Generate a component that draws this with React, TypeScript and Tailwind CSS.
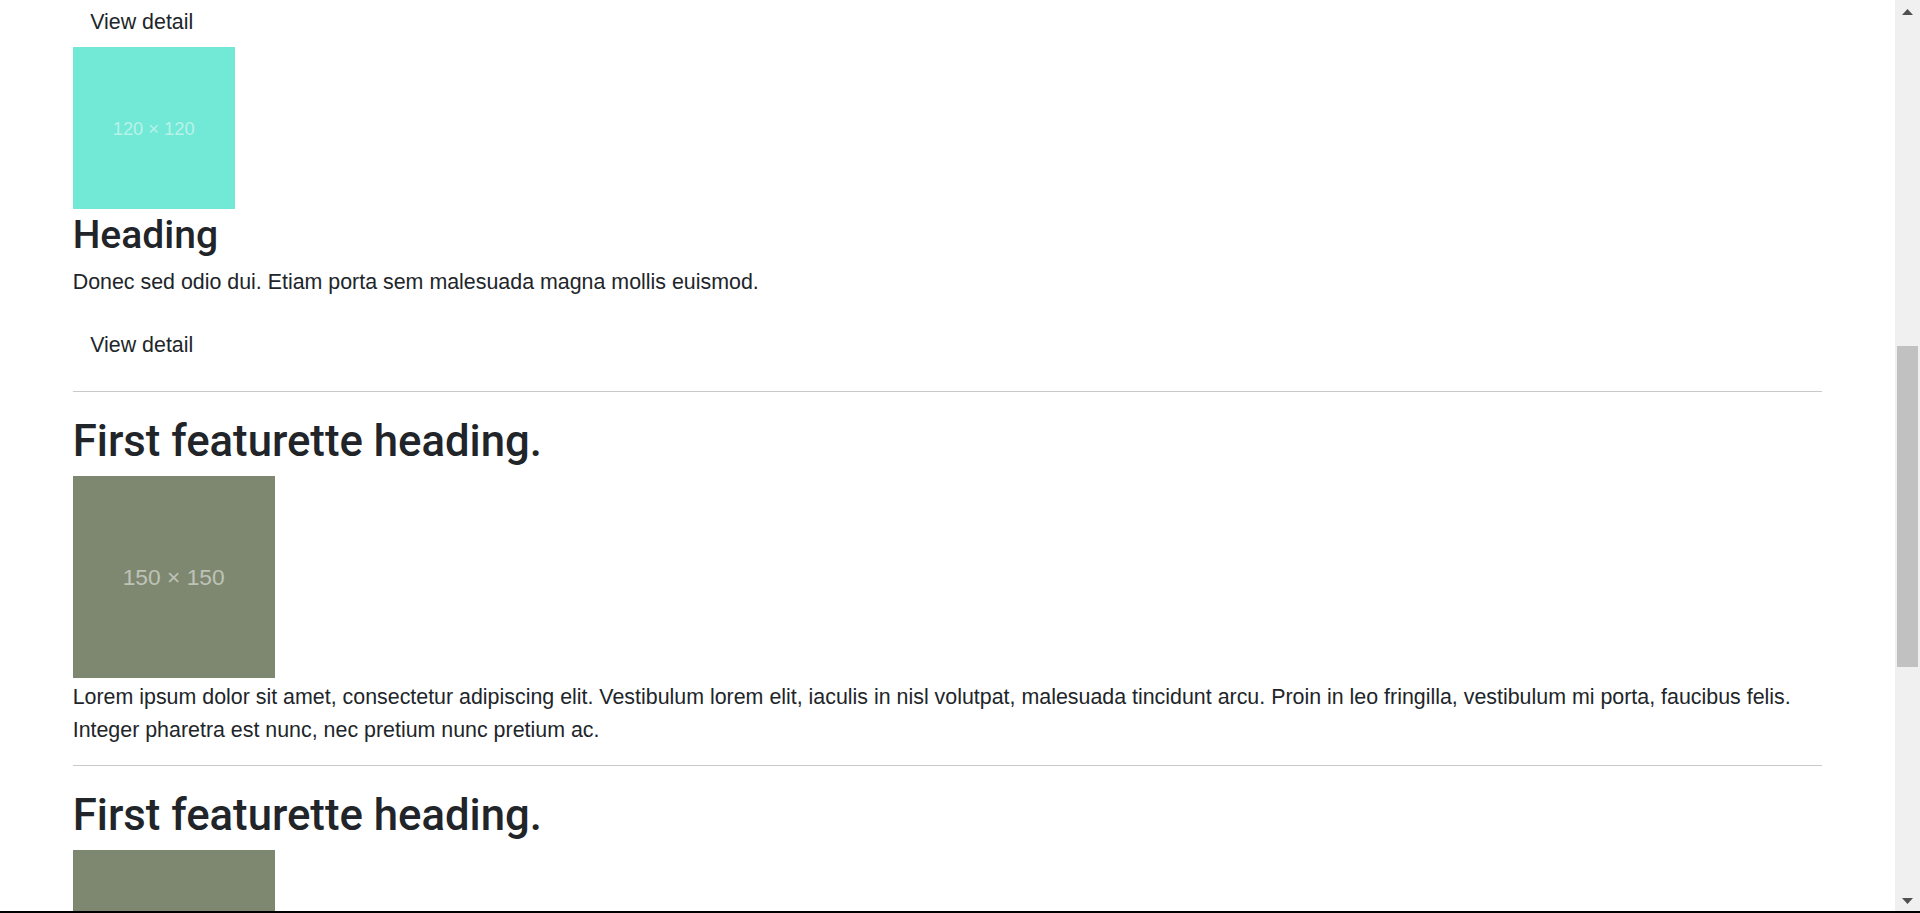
const body = "font-['Liberation_Sans',Arial,sans-serif]";
const head = "font-['Roboto','Liberation_Sans',sans-serif] font-medium";

const Placeholder = ({
  size,
  label,
  bg,
  textSize,
}: {
  size: string;
  label?: string;
  bg: string;
  textSize: string;
}) => (
  <div className={`${size} ${bg} flex items-center justify-center shrink-0`}>
    {label && <span className={`${textSize} text-white/50 ${body}`}>{label}</span>}
  </div>
);

const ViewButton = ({ className = "" }: { className?: string }) => (
  <button
    className={`block border border-transparent px-[16.5px] py-[8.5px] text-[21.4px] leading-[32.4px] text-[#212529] rounded-md ${className}`}
  >
    View detail
  </button>
);

// last one runs past the fold, so only what is on screen is drawn
const Featurette = ({ folded = false }: { folded?: boolean }) => (
  <div>
    <hr className="border-0 border-t border-[#c8c9ca]" />
    <h2
      className={`${head} mt-[23px] mb-[9px] text-[43.7px] leading-[52px] text-[#212529]`}
    >
      First featurette heading.
    </h2>
    <Placeholder
      size="w-[202px] h-[202px]"
      bg="bg-[#7e8870]"
      label={folded ? undefined : "150 × 150"}
      textSize="text-[22.8px]"
    />
    {!folded && (
      <p className="mt-[3px] mb-[19px] text-[21.4px] leading-[32.4px]">
        Lorem ipsum dolor sit amet, consectetur adipiscing elit. Vestibulum
        lorem elit, iaculis in nisl volutpat, malesuada tincidunt arcu. Proin in
        leo fringilla, vestibulum mi porta, faucibus felis. Integer pharetra est
        nunc, nec pretium nunc pretium ac.
      </p>
    )}
  </div>
);

const Scrollbar = () => (
  <div className="w-[25px] shrink-0 bg-[#f0f0f0] flex flex-col items-center">
    <svg width="11" height="6" viewBox="0 0 11 6" className="mt-[9px] shrink-0">
      <polygon points="5.5,0 11,6 0,6" fill="#505050" />
    </svg>
    <div className="mt-[331px] w-[21px] h-[321px] bg-[#c1c1c1] shrink-0" />
    <div className="flex-1" />
    <svg width="11" height="6" viewBox="0 0 11 6" className="mb-[7px] shrink-0">
      <polygon points="0,0 11,0 5.5,6" fill="#505050" />
    </svg>
  </div>
);

export default function App() {
  return (
    <div className={`w-[1920px] h-[913px] flex flex-col bg-white overflow-hidden ${body} text-[#212529]`}>
      <div className="flex flex-1 min-h-0">
        <main className="flex-1 min-w-0 overflow-hidden">
          <div className="w-[1782px] mx-auto px-[16.2px] -mt-[4px]">
            <div>
              <ViewButton />
              <Placeholder
                size="w-[162px] h-[162px]"
                bg="bg-[#72e8d6]"
                label="120 × 120"
                textSize="text-[18.3px]"
              />
              <h2
                className={`${head} mt-0 mb-[5px] text-[39px] leading-[52px]`}
              >
                Heading
              </h2>
              <p className="mb-[21px] text-[21.4px] leading-[32.4px]">
                Donec sed odio dui. Etiam porta sem malesuada magna mollis
                euismod.
              </p>
              <ViewButton />
            </div>
            <div className="mt-[20px]">
              <Featurette />
              <Featurette folded />
            </div>
          </div>
        </main>
        <Scrollbar />
      </div>
      <div className="h-[2px] bg-black shrink-0" />
    </div>
  );
}
